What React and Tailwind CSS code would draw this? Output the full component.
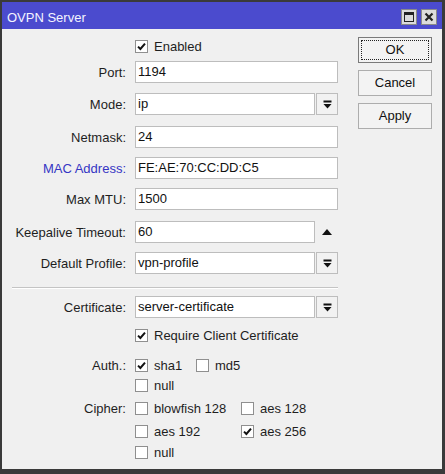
import React from "react";

const font = { fontFamily: '"Liberation Sans", Arial, sans-serif' };

function Check({ checked }) {
  return (
    <span className="w-[13px] h-[13px] border border-[#8f8f8f] bg-white flex items-center justify-center shrink-0">
      {checked && (
        <svg width="9" height="9" viewBox="0 0 9 9">
          <path d="M1 4.6 L3.4 7 L8 1.6" stroke="#111" strokeWidth="2" fill="none" />
        </svg>
      )}
    </span>
  );
}

function CheckItem({ checked, label, className = "" }) {
  return (
    <div className={"flex items-center gap-[6px] " + className}>
      <Check checked={checked} />
      <span className="text-[13px] text-[#1e1e1e] leading-none">{label}</span>
    </div>
  );
}

function DropIcon() {
  return (
    <svg width="9" height="9" viewBox="0 0 9 9">
      <rect x="0.5" y="0.5" width="8" height="2" fill="#111" />
      <path d="M0.5 4 L8.5 4 L4.5 8.5 Z" fill="#111" />
    </svg>
  );
}

function Label({ children, blue }) {
  return (
    <div
      className={
        "w-[125px] text-right text-[13px] leading-none pr-[1px] " +
        (blue ? "text-[#3535c4]" : "text-[#1e1e1e]")
      }
    >
      {children}
    </div>
  );
}

function Input({ value, className = "w-[203px]" }) {
  return (
    <div
      className={
        "h-[22px] border border-[#bdbdbd] bg-white flex items-center pl-[2px] text-[13px] text-[#111] " +
        className
      }
    >
      {value}
    </div>
  );
}

function Row({ label, blue, children, className = "" }) {
  return (
    <div className={"flex items-center h-[22px] " + className}>
      <Label blue={blue}>{label}</Label>
      <div className="ml-[8px] flex items-center">{children}</div>
    </div>
  );
}

function DropRow({ label, value, className }) {
  return (
    <Row label={label} className={className}>
      <Input value={value} className="w-[180px]" />
      <div className="ml-[1px] w-[22px] h-[22px] border border-[#bdbdbd] bg-[#f2f2f2] flex items-center justify-center">
        <DropIcon />
      </div>
    </Row>
  );
}

function Btn({ children, focus }) {
  return (
    <div
      className={
        "w-[74px] h-[26px] border bg-[#f3f3f3] flex items-center justify-center text-[13px] text-[#111] relative " +
        (focus ? "border-[#7a7a7a]" : "border-[#adadad]")
      }
    >
      {focus && (
        <div className="absolute inset-[2px] border border-dotted border-[#222]" />
      )}
      <span className="relative">{children}</span>
    </div>
  );
}

export default function App() {
  return (
    <div
      className="w-[445px] h-[474px] bg-[#3a3a3a] pt-[2px] pl-[2px] pr-[3px] pb-[5px] flex flex-col"
      style={font}
    >
      {/* title bar */}
      <div className="h-[27px] bg-[#4b4bce] flex items-center shrink-0">
        <span className="ml-[5px] mt-[3px] text-[13px] text-[#f4f4ff] leading-none">OVPN Server</span>
        <div className="ml-auto flex items-center gap-[4px] mr-[5px] mt-[2px]">
          <div className="w-[16px] h-[16px] bg-[#dcdcdc] border border-[#8a8a8a] flex items-center justify-center">
            <div className="w-[10px] h-[10px] border border-[#222] border-t-[3px]" />
          </div>
          <div className="w-[16px] h-[16px] bg-[#dcdcdc] border border-[#8a8a8a] flex items-center justify-center">
            <svg width="10" height="10" viewBox="0 0 10 10">
              <path d="M1.5 1.5 L8.5 8.5 M8.5 1.5 L1.5 8.5" stroke="#222" strokeWidth="2.2" />
            </svg>
          </div>
        </div>
      </div>

      {/* content */}
      <div className="flex-1 bg-[#f0f0f0] flex">
        <div className="w-[336px] flex flex-col">
          <div className="mt-[6px] h-[22px] flex items-center ml-[133px]">
            <CheckItem checked label="Enabled" />
          </div>
          <Row label="Port:" className="mt-[4px]">
            <Input value="1194" />
          </Row>
          <DropRow label="Mode:" value="ip" className="mt-[10px]" />
          <Row label="Netmask:" className="mt-[11px]">
            <Input value="24" />
          </Row>
          <Row label="MAC Address:" blue className="mt-[9px]">
            <Input value="FE:AE:70:CC:DD:C5" />
          </Row>
          <Row label="Max MTU:" className="mt-[9px]">
            <Input value="1500" />
          </Row>
          <Row label="Keepalive Timeout:" className="mt-[11px]">
            <Input value="60" className="w-[180px]" />
            <div className="w-[22px] h-[22px] ml-[1px] flex items-center justify-center">
              <svg width="10" height="6" viewBox="0 0 10 6">
                <path d="M0 6 L5 0 L10 6 Z" fill="#111" />
              </svg>
            </div>
          </Row>
          <DropRow label="Default Profile:" value="vpn-profile" className="mt-[9px]" />

          <div className="mt-[13px] ml-[10px] w-[326px] h-[2px] border-t border-[#c4c4c4] border-b border-b-white" />

          <DropRow label="Certificate:" value="server-certificate" className="mt-[7px]" />
          <div className="mt-[7px] h-[20px] flex items-center ml-[133px]">
            <CheckItem checked label="Require Client Certificate" />
          </div>

          <div className="mt-[10px] flex">
            <div className="h-[20px] flex items-center">
              <Label>Auth.:</Label>
            </div>
            <div className="ml-[8px] grid grid-cols-[61px_auto]">
              <div className="h-[20px] flex items-center"><CheckItem checked label="sha1" /></div>
              <div className="h-[20px] flex items-center"><CheckItem label="md5" /></div>
              <div className="h-[20px] flex items-center"><CheckItem label="null" /></div>
            </div>
          </div>

          <div className="mt-[3px] flex">
            <div className="h-[20px] flex items-center">
              <Label>Cipher:</Label>
            </div>
            <div className="ml-[8px] grid grid-cols-[106px_auto] gap-y-[3px]">
              <div className="h-[20px] flex items-center"><CheckItem label="blowfish 128" /></div>
              <div className="h-[20px] flex items-center"><CheckItem label="aes 128" /></div>
              <div className="h-[20px] flex items-center"><CheckItem label="aes 192" /></div>
              <div className="h-[20px] flex items-center"><CheckItem checked label="aes 256" /></div>
              <div className="h-[20px] flex items-center -mt-[2px]"><CheckItem label="null" /></div>
            </div>
          </div>
        </div>

        <div className="ml-[20px] mt-[8px] flex flex-col gap-[7px]">
          <Btn focus>OK</Btn>
          <Btn>Cancel</Btn>
          <Btn>Apply</Btn>
        </div>
      </div>
    </div>
  );
}
